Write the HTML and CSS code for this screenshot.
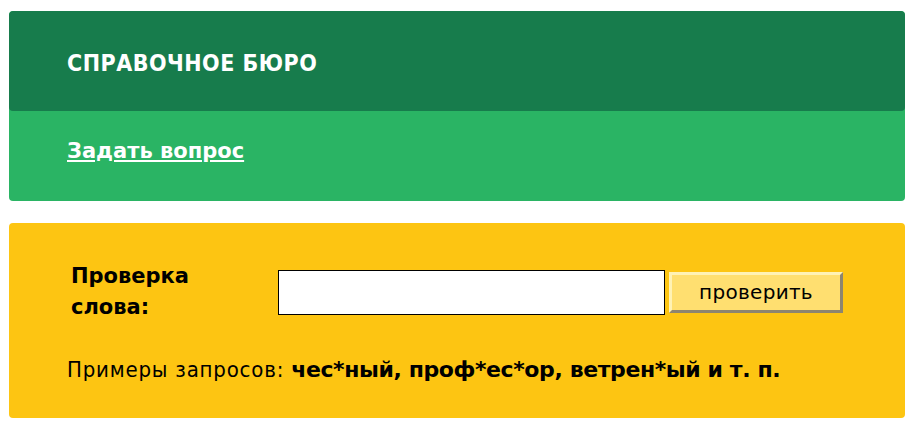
FILE: index.html
```html
<!DOCTYPE html>
<html lang="ru">
<head>
<meta charset="utf-8">
<title>Справочное бюро</title>
<link rel="stylesheet" href="styles.css">
</head>
<body>
<div class="page">
  <section class="bureau">
    <div class="bureau-head">
      <h1 class="bureau-title">СПРАВОЧНОЕ БЮРО</h1>
    </div>
    <div class="bureau-body">
      <a class="bureau-link" href="#">Задать вопрос</a>
    </div>
  </section>
  <section class="check">
    <form class="check-form">
      <label class="check-label" for="word">Проверка слова:</label>
      <input class="check-input" id="word" type="text">
      <button class="check-button" type="button">проверить</button>
    </form>
    <p class="check-examples">Примеры запросов: <b class="check-samples">чес*ный, проф*ес*ор, ветрен*ый и т. п.</b></p>
  </section>
</div>
</body>
</html>
```
FILE: styles.css
```css
html, body {
  margin: 0;
  padding: 0;
  background: #fff;
}
body {
  font-family: "DejaVu Sans", Verdana, sans-serif;
  color: #000;
}
.page {
  padding: 11px 9px 0 9px;
  display: flex;
  flex-direction: column;
  gap: 22px;
}
.bureau {
  background: #2ab464;
  border-radius: 4px;
  overflow: hidden;
}
.bureau-head {
  background: #177c4c;
  height: 100px;
  border-radius: 4px;
  box-sizing: border-box;
  padding: 38px 58px 0;
}
.bureau-title {
  margin: 0;
  font-family: "DejaVu Sans Condensed", "DejaVu Sans", sans-serif;
  font-size: 23px;
  line-height: 28px;
  letter-spacing: 0.5px;
  font-weight: bold;
  color: #fff;
}
.bureau-body {
  height: 90px;
  box-sizing: border-box;
  padding: 27px 58px 0;
}
.bureau-link {
  font-size: 21px;
  line-height: 26px;
  font-weight: bold;
  color: #fff;
  text-decoration: underline;
}
.check {
  background: #fdc512;
  border-radius: 4px;
  height: 195px;
  box-sizing: border-box;
  padding: 38px 58px 0;
}
.check-form {
  display: flex;
  align-items: center;
  margin: 0;
}
.check-label {
  width: 207px;
  padding: 0 50px 0 4px;
  box-sizing: border-box;
  font-size: 21px;
  line-height: 31px;
  font-weight: bold;
}
.check-input {
  width: 387px;
  height: 45px;
  box-sizing: border-box;
  border: 1px solid #000;
  background: #fff;
  margin: 0 4px 0 4px;
  padding: 0 4px;
  font: inherit;
}
.check-button {
  width: 174px;
  height: 41px;
  box-sizing: border-box;
  background: #ffdf70;
  border: 3px solid;
  border-color: #fff2b5 #8d8570 #8d8570 #fff2b5;
  font-family: "DejaVu Sans", Verdana, sans-serif;
  font-size: 20px;
  letter-spacing: 0.3px;
  color: #000;
  padding: 0;
}
.check-examples {
  margin: 34px 0 0;
  font-family: "DejaVu Sans Condensed", "DejaVu Sans", sans-serif;
  font-size: 22px;
  line-height: 26px;
  letter-spacing: 0.8px;
}
.check-samples {
  font-family: "DejaVu Sans", Verdana, sans-serif;
  font-weight: bold;
  letter-spacing: -0.4px;
}
```
